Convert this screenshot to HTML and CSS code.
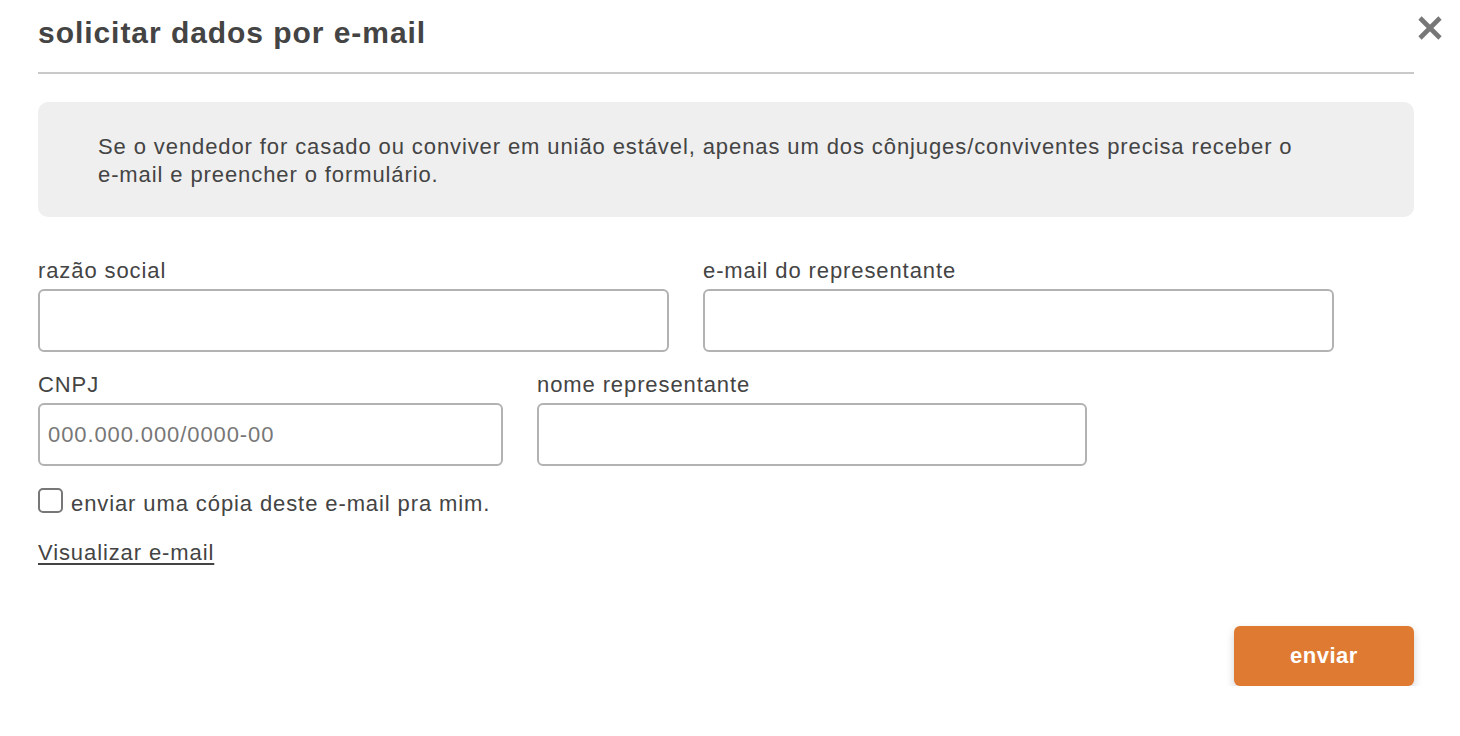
FILE: index.html
```html
<!DOCTYPE html>
<html lang="pt-BR">
<head>
<meta charset="utf-8">
<title>solicitar dados por e-mail</title>
<link rel="stylesheet" href="styles.css">
</head>
<body>
<div class="modal">
  <button class="close" aria-label="fechar">
    <svg width="26" height="26" viewBox="0 0 26 26"><path d="M3 3 L23 23 M23 3 L3 23" stroke="#777" stroke-width="4.6" stroke-linecap="butt"/></svg>
  </button>
  <header class="head">
    <h1 class="title">solicitar dados por e-mail</h1>
  </header>
  <div class="notice">
    <p>Se o vendedor for casado ou conviver em união estável, apenas um dos cônjuges/conviventes precisa receber o e-mail e preencher o formulário.</p>
  </div>
  <form class="form">
    <div class="row">
      <label class="field w631">
        <span class="label">razão social</span>
        <input type="text" class="input">
      </label>
      <label class="field w631">
        <span class="label">e-mail do representante</span>
        <input type="text" class="input">
      </label>
    </div>
    <div class="row">
      <label class="field w465">
        <span class="label">CNPJ</span>
        <input type="text" class="input" placeholder="000.000.000/0000-00">
      </label>
      <label class="field w550">
        <span class="label">nome representante</span>
        <input type="text" class="input">
      </label>
    </div>
    <label class="check">
      <span class="box"></span>
      <span>enviar uma cópia deste e-mail pra mim.</span>
    </label>
    <div class="link-row"><a class="link" href="#">Visualizar e-mail</a></div>
    <div class="actions">
      <button type="button" class="submit">enviar</button>
    </div>
  </form>
</div>
</body>
</html>
```

FILE: styles.css
```css
* { box-sizing: border-box; }
html, body { margin: 0; padding: 0; background: #fff; }
body {
  font-family: "Liberation Sans", Arial, sans-serif;
  color: #444;
  letter-spacing: 0.9px;
}
.modal {
  position: relative;
  padding: 0 46px 0 38px;
  width: 1460px;
}
.close {
  position: absolute;
  top: 15px;
  right: 17px;
  border: 0;
  background: none;
  padding: 0;
  width: 26px;
  height: 26px;
  cursor: pointer;
}
.close svg { display: block; }
.head {
  height: 74px;
  border-bottom: 2px solid #c9c9c9;
  padding-top: 13px;
}
.title {
  margin: 0;
  font-size: 30px;
  line-height: 40px;
  font-weight: 700;
  letter-spacing: 0.95px;
  color: #444;
}
.notice {
  margin-top: 28px;
  background: #efefef;
  border-radius: 10px;
  height: 115px;
  padding: 31px 100px 0 60px;
}
.notice p {
  margin: 0;
  font-size: 22px;
  line-height: 28px;
  color: #444;
}
.form { margin-top: 40px; }
.row {
  display: flex;
  gap: 34px;
  margin-bottom: 19px;
}
.field { display: flex; flex-direction: column; }
.w631 { width: 631px; }
.w465 { width: 465px; }
.w550 { width: 550px; }
.label {
  font-size: 22px;
  line-height: 28px;
  margin-bottom: 4px;
}
.input {
  height: 63px;
  border: 2px solid #b2b2b2;
  border-radius: 6px;
  font-family: "Liberation Sans", Arial, sans-serif;
  font-size: 22px;
  letter-spacing: 0.9px;
  padding: 0 8px;
  color: #444;
  background: #fff;
}
.input::placeholder { color: #777; }
.check {
  display: flex;
  align-items: flex-start;
  gap: 8px;
  font-size: 22px;
  line-height: 28px;
  margin-top: 24px;
}
.box {
  flex: none;
  width: 25px;
  height: 25px;
  border: 2px solid #777;
  border-radius: 5px;
  margin-top: -2px;
}
.link-row {
  margin-top: 21px;
  font-size: 22px;
  line-height: 28px;
}
.link {
  color: #444;
  text-decoration: underline;
  text-underline-offset: 3px;
}
.actions {
  display: flex;
  justify-content: flex-end;
  margin-top: 59px;
}
.submit {
  width: 180px;
  height: 60px;
  border: 0;
  border-radius: 6px;
  background: #df7a32;
  color: #fff;
  font-family: "Liberation Sans", Arial, sans-serif;
  font-size: 22px;
  letter-spacing: 0.5px;
  font-weight: 700;
  box-shadow: 0 4px 8px rgba(0,0,0,0.18);
  cursor: pointer;
}
```
